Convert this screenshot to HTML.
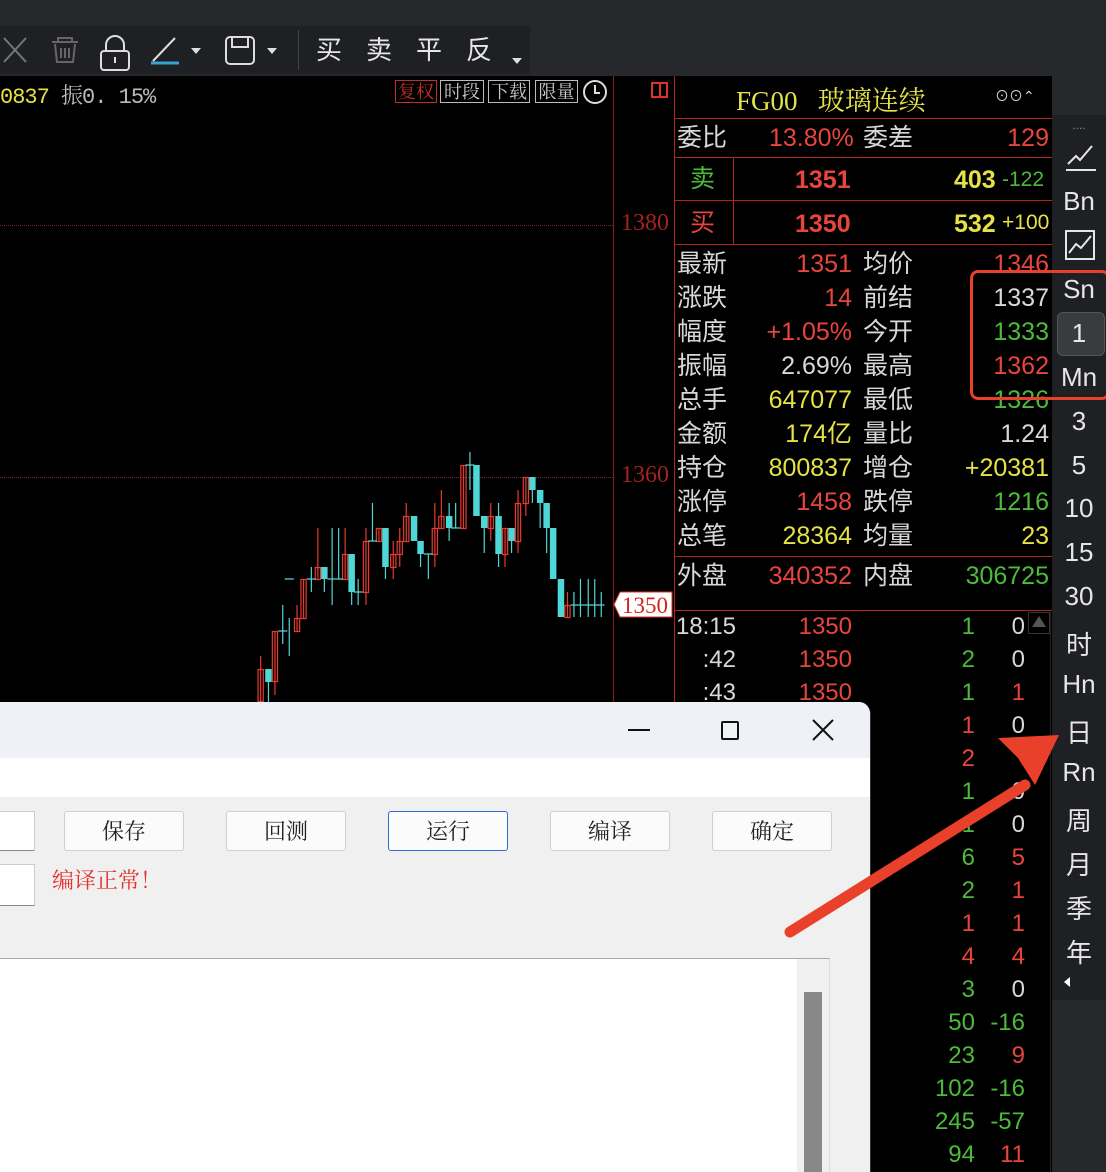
<!DOCTYPE html>
<html><head><meta charset="utf-8"><style>
*{margin:0;padding:0;box-sizing:border-box}
body{width:1106px;height:1172px;overflow:hidden;background:#000;position:relative;font-family:"Liberation Sans","Noto Sans CJK SC",sans-serif}
.a{position:absolute;white-space:nowrap}
.r{color:#e8453c}.g{color:#4dbb3a}.y{color:#e6e245}.w{color:#d8d8d8}
.q{font-size:25px;line-height:34px}
.sb{position:absolute;left:1052px;width:54px;text-align:center;color:#e6e6e6;font-size:26px}
.btn{position:absolute;top:811px;width:120px;height:40px;background:#fbfbfb;border:1px solid #cfcfcf;border-radius:3px;font-size:22px;text-align:center;line-height:38px;color:#222}
</style></head><body>
<div class="a" style="left:0;top:0;width:1106px;height:76px;background:#27282c"></div>
<div class="a" style="left:0;top:26px;width:530px;height:48px;background:#1f2024"></div>
<div class="a" style="left:298px;top:30px;width:1px;height:40px;background:#444"></div>
<svg class="a" style="left:0;top:26px" width="530" height="48">
<g fill="none" stroke-width="2">
<path d="M4 12 L26 36 M26 12 L4 36" stroke="#777"/>
<path d="M52 16h26 M58 16v-4h14v4 M55 18l2 18h16l2-18 M61 22v10 M65 22v10 M69 22v10" stroke="#666"/>
<rect x="101" y="25" width="28" height="19" rx="3" stroke="#ddd"/><path d="M106 25v-6a9 9 0 0 1 18 0v6 M115 31v6" stroke="#ddd"/>
<path d="M153 35 L175 12" stroke="#ddd"/><path d="M151 37h28" stroke="#3aa0d0" stroke-width="3"/>
<rect x="226" y="11" width="28" height="27" rx="4" stroke="#ddd"/><path d="M232 11v10h16v-10" stroke="#ddd"/>
</g>
<path d="M191 22h10l-5 6z M267 22h10l-5 6z M512 32h10l-5 6z" fill="#ddd"/>
<text x="316" y="33" fill="#e6e6e6" font-size="26" font-family="Noto Sans CJK SC">买</text>
<text x="366" y="33" fill="#e6e6e6" font-size="26" font-family="Noto Sans CJK SC">卖</text>
<text x="416" y="33" fill="#e6e6e6" font-size="26" font-family="Noto Sans CJK SC">平</text>
<text x="466" y="33" fill="#e6e6e6" font-size="26" font-family="Noto Sans CJK SC">反</text>
</svg>
<div class="a" style="left:0;top:79px;font-family:'Liberation Mono','Noto Serif CJK SC',monospace;font-size:22px;color:#e6e245;letter-spacing:-1px">0837 <span style="color:#bbb">振0. 15%</span></div>
<div class="a" style="left:395px;top:80px;width:42px;height:23px;border:1px solid #c0302a;color:#c0302a;font-size:18px;line-height:21px;text-align:center;font-family:'Noto Serif CJK SC',serif">复权</div>
<div class="a" style="left:440px;top:80px;width:44px;height:23px;border:1px solid #bbb;color:#ccc;font-size:18px;line-height:21px;text-align:center;font-family:'Noto Serif CJK SC',serif">时段</div>
<div class="a" style="left:488px;top:80px;width:42px;height:23px;border:1px solid #bbb;color:#ccc;font-size:18px;line-height:21px;text-align:center;font-family:'Noto Serif CJK SC',serif">下载</div>
<div class="a" style="left:535px;top:80px;width:43px;height:23px;border:1px solid #bbb;color:#ccc;font-size:18px;line-height:21px;text-align:center;font-family:'Noto Serif CJK SC',serif">限量</div>
<svg class="a" style="left:582px;top:79px" width="28" height="26"><circle cx="13" cy="13" r="11" fill="none" stroke="#ddd" stroke-width="2"/><path d="M13 6v8h5" stroke="#ddd" stroke-width="2" fill="none"/></svg>
<div class="a" style="left:651px;top:82px;width:17px;height:16px;border:2px solid #e0302a"></div>
<div class="a" style="left:659px;top:82px;width:2px;height:16px;background:#e0302a"></div>
<div class="a" style="left:613px;top:76px;width:1px;height:630px;background:#8a1c16"></div>
<div class="a" style="left:0;top:225px;width:613px;border-top:1px dotted #7a2a22"></div>
<div class="a" style="left:0;top:477px;width:613px;border-top:1px dotted #7a2a22"></div>
<div class="a" style="left:621px;top:210px;font-family:'Liberation Serif',serif;font-size:24px;color:#a3241c">1380</div>
<div class="a" style="left:621px;top:462px;font-family:'Liberation Serif',serif;font-size:24px;color:#a3241c">1360</div>
<svg class="a" style="left:613px;top:591px" width="60" height="27"><path d="M7 1H59V26H7L1 13.5Z" fill="#fff" stroke="#e0302a"/><text x="9" y="22" font-family="Liberation Serif" font-size="23" fill="#d0251c">1350</text></svg>
<svg class="a" style="left:0;top:0" width="613" height="702">
<g transform="scale(1.3,1)">
<g stroke="#e8392f" fill="none" stroke-width="1.2" vector-effect="non-scaling-stroke">
<path vector-effect="non-scaling-stroke" d="M200.5 656V702 M211.5 631V695 M228.5 605V631 M233.5 579V618 M244.5 528V579 M265.5 528V579 M281.5 528V605 M291.5 528V541 M302.5 541V579 M307.5 528V567 M312.5 503V541 M334.5 503V567 M339.5 490V528 M356.5 465V528 M377.5 503V541 M388.5 528V567 M398.5 490V553 M404.5 477V516 M436.5 592V617"/>
<g vector-effect="non-scaling-stroke">
<rect vector-effect="non-scaling-stroke" x="198.5" y="669.5" width="4" height="32"/><rect vector-effect="non-scaling-stroke" x="209.5" y="631.5" width="4" height="50"/><rect vector-effect="non-scaling-stroke" x="226.5" y="618.5" width="4" height="13"/><rect vector-effect="non-scaling-stroke" x="231.5" y="579.5" width="4" height="39"/><rect vector-effect="non-scaling-stroke" x="242.5" y="567.5" width="4" height="12"/><rect vector-effect="non-scaling-stroke" x="263.5" y="554.5" width="4" height="25"/><rect vector-effect="non-scaling-stroke" x="279.5" y="541.5" width="4" height="51"/><rect vector-effect="non-scaling-stroke" x="289.5" y="528.5" width="4" height="13"/><rect vector-effect="non-scaling-stroke" x="300.5" y="554.5" width="4" height="13"/><rect vector-effect="non-scaling-stroke" x="305.5" y="541.5" width="4" height="13"/><rect vector-effect="non-scaling-stroke" x="310.5" y="516.5" width="4" height="25"/><rect vector-effect="non-scaling-stroke" x="332.5" y="528.5" width="4" height="26"/><rect vector-effect="non-scaling-stroke" x="337.5" y="516.5" width="4" height="12"/><rect vector-effect="non-scaling-stroke" x="354.5" y="465.5" width="4" height="63"/><rect vector-effect="non-scaling-stroke" x="375.5" y="516.5" width="4" height="12"/><rect vector-effect="non-scaling-stroke" x="386.5" y="528.5" width="4" height="26"/><rect vector-effect="non-scaling-stroke" x="396.5" y="503.5" width="4" height="38"/><rect vector-effect="non-scaling-stroke" x="402.5" y="477.5" width="4" height="26"/><rect vector-effect="non-scaling-stroke" x="434.5" y="605.5" width="4" height="12"/>
</g></g>
<g stroke="#4fd6d6" stroke-width="1.2">
<path vector-effect="non-scaling-stroke" d="M206.5 669V702 M217.5 605V644 M214 631H221 M222.5 618V656 M219 579H226 M239.5 567V592 M236 579H243 M249.5 567V592 M255.5 528V605 M252 579H259 M260.5 528V579 M257 579H264 M270.5 554V605 M275.5 579V605 M272 592H279 M286.5 503V541 M283 541H290 M296.5 528V579 M318.5 516V541 M323.5 541V567 M329.5 554V579 M326 554H333 M345.5 503V541 M350.5 503V528 M347 528H354 M361.5 452V490 M358 465H365 M366.5 465V516 M372.5 516V553 M383.5 503V567 M393.5 528V553 M409.5 477V503 M415.5 490V528 M420.5 503V553 M425.5 528V565 M431.5 579V617 M441.5 592V617 M446.5 579V617 M452.5 579V617 M457.5 579V617 M462.5 592V617 M439 605H465"/>
</g>
<g fill="#4fd6d6">
<rect x="204" y="669" width="5" height="13"/><rect x="247" y="567" width="5" height="12"/><rect x="268" y="554" width="5" height="38"/><rect x="294" y="528" width="5" height="39"/><rect x="316" y="516" width="5" height="25"/><rect x="321" y="541" width="5" height="13"/><rect x="343" y="516" width="5" height="12"/><rect x="364" y="465" width="5" height="51"/><rect x="370" y="516" width="5" height="12"/><rect x="381" y="516" width="5" height="38"/><rect x="391" y="528" width="5" height="13"/><rect x="407" y="477" width="5" height="13"/><rect x="413" y="490" width="5" height="13"/><rect x="418" y="503" width="5" height="25"/><rect x="423" y="528" width="5" height="51"/><rect x="429" y="579" width="5" height="38"/>
</g>
</g>
</svg>
<div class="a" style="left:674px;top:76px;width:1px;height:630px;background:#b0241c"></div>
<div class="a" style="left:674px;top:118px;width:378px;height:1px;background:#b0241c"></div>
<div class="a" style="left:674px;top:157px;width:378px;height:1px;background:#b0241c"></div>
<div class="a" style="left:674px;top:200px;width:378px;height:1px;background:#b0241c"></div>
<div class="a" style="left:674px;top:244px;width:378px;height:1px;background:#b0241c"></div>
<div class="a" style="left:733px;top:157px;width:1px;height:87px;background:#b0241c"></div>
<div class="a" style="left:674px;top:556px;width:378px;height:1px;background:#b0241c"></div>
<div class="a" style="left:674px;top:610px;width:378px;height:1px;background:#b0241c"></div>
<div class="a" style="left:736px;top:79px;font-family:'Liberation Serif','Noto Serif CJK SC',serif;font-size:27px;color:#e6e245">FG00&nbsp;&nbsp;&nbsp;玻璃连续</div>
<div class="a w" style="left:995px;top:86px;font-size:14px">⊙⊙⌃</div>
<div class="a q w" style="left:677px;top:121px">委比</div><div class="a q r" style="left:769px;top:121px">13.80%</div><div class="a q w" style="left:863px;top:121px">委差</div><div class="a q r" style="left:1000px;top:121px;width:49px;text-align:right">129</div>
<div class="a q g" style="left:690px;top:162px">卖</div><div class="a q r" style="left:795px;top:163px;font-weight:bold">1351</div><div class="a q y" style="left:954px;top:163px;font-weight:bold">403</div><div class="a g" style="left:1002px;top:168px;font-size:21px">-122</div>
<div class="a q r" style="left:690px;top:206px">买</div><div class="a q r" style="left:795px;top:207px;font-weight:bold">1350</div><div class="a q y" style="left:954px;top:207px;font-weight:bold">532</div><div class="a" style="left:1002px;top:211px;font-size:21px;color:#e6e245">+100</div>
<div class="a q" style="left:677px;top:247px;width:374px">
<div style="display:flex"><span class="w" style="width:60px">最新</span><span class="r" style="width:115px;text-align:right">1351</span><span class="w" style="width:60px;margin-left:11px">均价</span><span class="r" style="width:126px;text-align:right">1346</span></div>
<div style="display:flex"><span class="w" style="width:60px">涨跌</span><span class="r" style="width:115px;text-align:right">14</span><span class="w" style="width:60px;margin-left:11px">前结</span><span class="w" style="width:126px;text-align:right">1337</span></div>
<div style="display:flex"><span class="w" style="width:60px">幅度</span><span class="r" style="width:115px;text-align:right">+1.05%</span><span class="w" style="width:60px;margin-left:11px">今开</span><span class="g" style="width:126px;text-align:right">1333</span></div>
<div style="display:flex"><span class="w" style="width:60px">振幅</span><span class="w" style="width:115px;text-align:right">2.69%</span><span class="w" style="width:60px;margin-left:11px">最高</span><span class="r" style="width:126px;text-align:right">1362</span></div>
<div style="display:flex"><span class="w" style="width:60px">总手</span><span class="y" style="width:115px;text-align:right">647077</span><span class="w" style="width:60px;margin-left:11px">最低</span><span class="g" style="width:126px;text-align:right">1326</span></div>
<div style="display:flex"><span class="w" style="width:60px">金额</span><span class="y" style="width:115px;text-align:right">174亿</span><span class="w" style="width:60px;margin-left:11px">量比</span><span class="w" style="width:126px;text-align:right">1.24</span></div>
<div style="display:flex"><span class="w" style="width:60px">持仓</span><span class="y" style="width:115px;text-align:right">800837</span><span class="w" style="width:60px;margin-left:11px">增仓</span><span class="y" style="width:126px;text-align:right">+20381</span></div>
<div style="display:flex"><span class="w" style="width:60px">涨停</span><span class="r" style="width:115px;text-align:right">1458</span><span class="w" style="width:60px;margin-left:11px">跌停</span><span class="g" style="width:126px;text-align:right">1216</span></div>
<div style="display:flex"><span class="w" style="width:60px">总笔</span><span class="y" style="width:115px;text-align:right">28364</span><span class="w" style="width:60px;margin-left:11px">均量</span><span class="y" style="width:126px;text-align:right">23</span></div>
<div style="display:flex;margin-top:6px"><span class="w" style="width:60px">外盘</span><span class="r" style="width:115px;text-align:right">340352</span><span class="w" style="width:60px;margin-left:11px">内盘</span><span class="g" style="width:126px;text-align:right">306725</span></div>
</div>
<div class="a" style="left:1028px;top:612px;width:22px;height:22px;border:1px solid #333"></div>
<div class="a" style="left:1032px;top:616px;width:0;height:0;border-left:7px solid transparent;border-right:7px solid transparent;border-bottom:11px solid #555"></div>
<div class="a" style="left:1050px;top:612px;width:1px;height:560px;background:#222"></div>
<div class="a q" style="left:675px;top:610px;line-height:33px;font-size:24px">
<div style="display:flex"><span class="w" style="width:61px;text-align:right">18:15</span><span class="r" style="width:116px;text-align:right">1350</span><span class="g" style="width:123px;text-align:right">1</span><span class="w" style="width:50px;text-align:right">0</span></div>
<div style="display:flex"><span class="w" style="width:61px;text-align:right">:42</span><span class="r" style="width:116px;text-align:right">1350</span><span class="g" style="width:123px;text-align:right">2</span><span class="w" style="width:50px;text-align:right">0</span></div>
<div style="display:flex"><span class="w" style="width:61px;text-align:right">:43</span><span class="r" style="width:116px;text-align:right">1350</span><span class="g" style="width:123px;text-align:right">1</span><span class="r" style="width:50px;text-align:right">1</span></div>
<div style="display:flex"><span style="width:177px"></span><span class="r" style="width:123px;text-align:right">1</span><span class="w" style="width:50px;text-align:right">0</span></div>
<div style="display:flex"><span style="width:177px"></span><span class="r" style="width:123px;text-align:right">2</span><span class="w" style="width:50px;text-align:right"></span></div>
<div style="display:flex"><span style="width:177px"></span><span class="g" style="width:123px;text-align:right">1</span><span class="w" style="width:50px;text-align:right">0</span></div>
<div style="display:flex"><span style="width:177px"></span><span class="g" style="width:123px;text-align:right">1</span><span class="w" style="width:50px;text-align:right">0</span></div>
<div style="display:flex"><span style="width:177px"></span><span class="g" style="width:123px;text-align:right">6</span><span class="r" style="width:50px;text-align:right">5</span></div>
<div style="display:flex"><span style="width:177px"></span><span class="g" style="width:123px;text-align:right">2</span><span class="r" style="width:50px;text-align:right">1</span></div>
<div style="display:flex"><span style="width:177px"></span><span class="r" style="width:123px;text-align:right">1</span><span class="r" style="width:50px;text-align:right">1</span></div>
<div style="display:flex"><span style="width:177px"></span><span class="r" style="width:123px;text-align:right">4</span><span class="r" style="width:50px;text-align:right">4</span></div>
<div style="display:flex"><span style="width:177px"></span><span class="g" style="width:123px;text-align:right">3</span><span class="w" style="width:50px;text-align:right">0</span></div>
<div style="display:flex"><span style="width:177px"></span><span class="g" style="width:123px;text-align:right">50</span><span class="g" style="width:50px;text-align:right">-16</span></div>
<div style="display:flex"><span style="width:177px"></span><span class="g" style="width:123px;text-align:right">23</span><span class="r" style="width:50px;text-align:right">9</span></div>
<div style="display:flex"><span style="width:177px"></span><span class="g" style="width:123px;text-align:right">102</span><span class="g" style="width:50px;text-align:right">-16</span></div>
<div style="display:flex"><span style="width:177px"></span><span class="g" style="width:123px;text-align:right">245</span><span class="g" style="width:50px;text-align:right">-57</span></div>
<div style="display:flex"><span style="width:177px"></span><span class="g" style="width:123px;text-align:right">94</span><span class="r" style="width:50px;text-align:right">11</span></div>
</div>
<div class="a" style="left:1052px;top:76px;width:54px;height:1096px;background:#27282c"></div>
<div class="a" style="left:1052px;top:115px;width:54px;height:885px;background:#1f2024"></div>
<div class="a" style="left:1057px;top:312px;width:48px;height:44px;background:#3a3b3f;border-radius:6px;border:1px solid #555"></div>
<div class="sb" style="top:118px;font-size:12px;color:#888">....</div>
<svg class="a" style="left:1064px;top:142px" width="34" height="30" fill="none" stroke="#e6e6e6" stroke-width="2"><path d="M4 22 L12 14 L16 18 L28 4 M2 28H32"/></svg>
<div class="sb" style="top:186px">Bn</div>
<svg class="a" style="left:1064px;top:229px" width="34" height="32" fill="none" stroke="#e6e6e6" stroke-width="2"><rect x="2" y="2" width="28" height="28"/><path d="M5 24 L12 15 L17 19 L27 7"/></svg>
<div class="sb" style="top:274px">Sn</div>
<div class="sb" style="top:318px">1</div>
<div class="sb" style="top:362px">Mn</div>
<div class="sb" style="top:406px">3</div>
<div class="sb" style="top:450px">5</div>
<div class="sb" style="top:493px">10</div>
<div class="sb" style="top:537px">15</div>
<div class="sb" style="top:581px">30</div>
<div class="sb" style="top:625px">时</div>
<div class="sb" style="top:669px">Hn</div>
<div class="sb" style="top:713px">日</div>
<div class="sb" style="top:757px">Rn</div>
<div class="sb" style="top:801px">周</div>
<div class="sb" style="top:845px">月</div>
<div class="sb" style="top:889px">季</div>
<div class="sb" style="top:933px">年</div>
<div class="a" style="left:1064px;top:977px;width:0;height:0;border-top:5px solid transparent;border-bottom:5px solid transparent;border-right:6px solid #fff"></div>
<div class="a" style="left:970px;top:270px;width:140px;height:130px;border:3px solid #e8402a;border-radius:8px"></div>
<div class="a" style="left:0;top:702px;width:871px;height:470px;background:#f0f0f0;border-top-right-radius:12px;border-right:1px solid #333;overflow:hidden">
<div class="a" style="left:0;top:0;width:871px;height:56px;background:#eef2f6"></div>
<div class="a" style="left:0;top:56px;width:871px;height:39px;background:#fff"></div>
<div class="a" style="left:628px;top:27px;width:22px;height:2px;background:#111"></div>
<div class="a" style="left:721px;top:19px;width:18px;height:19px;border:2px solid #111;border-radius:2px"></div>
<svg class="a" style="left:812px;top:17px" width="22" height="22"><path d="M1 1L21 21M21 1L1 21" stroke="#111" stroke-width="2"/></svg>
<div class="a" style="left:-2px;top:109px;width:37px;height:40px;background:#fff;border:1px solid #ccc;border-bottom:1px solid #888"></div>
<div class="a" style="left:-2px;top:162px;width:37px;height:42px;background:#fff;border:1px solid #ccc;border-bottom:1px solid #888"></div>
<div class="a" style="left:52px;top:162px;font-size:22px;color:#e8302a;font-family:'Noto Serif CJK SC',serif">编译正常！</div>
<div class="a" style="left:0;top:256px;width:830px;height:220px;background:#fff;border-top:1px solid #aaa;border-right:1px solid #ddd"></div>
<div class="a" style="left:797px;top:257px;width:32px;height:220px;background:#f0f0f0"></div>
<div class="a" style="left:804px;top:290px;width:18px;height:190px;background:#888"></div>
</div>
<div class="btn" style="left:64px;font-family:'Noto Serif CJK SC',serif">保存</div>
<div class="btn" style="left:226px;font-family:'Noto Serif CJK SC',serif">回测</div>
<div class="btn" style="left:388px;border-color:#2a6fd0;font-family:'Noto Serif CJK SC',serif">运行</div>
<div class="btn" style="left:550px;font-family:'Noto Serif CJK SC',serif">编译</div>
<div class="btn" style="left:712px;font-family:'Noto Serif CJK SC',serif">确定</div>
<svg class="a" style="left:0;top:0" width="1106" height="1172"><path d="M790 932 L1025 785" stroke="#e8402a" stroke-width="11" stroke-linecap="round"/><path d="M1059 735 L998 738 L1018 758 L1035 785 Z" fill="#e8402a"/></svg>
</body></html>
